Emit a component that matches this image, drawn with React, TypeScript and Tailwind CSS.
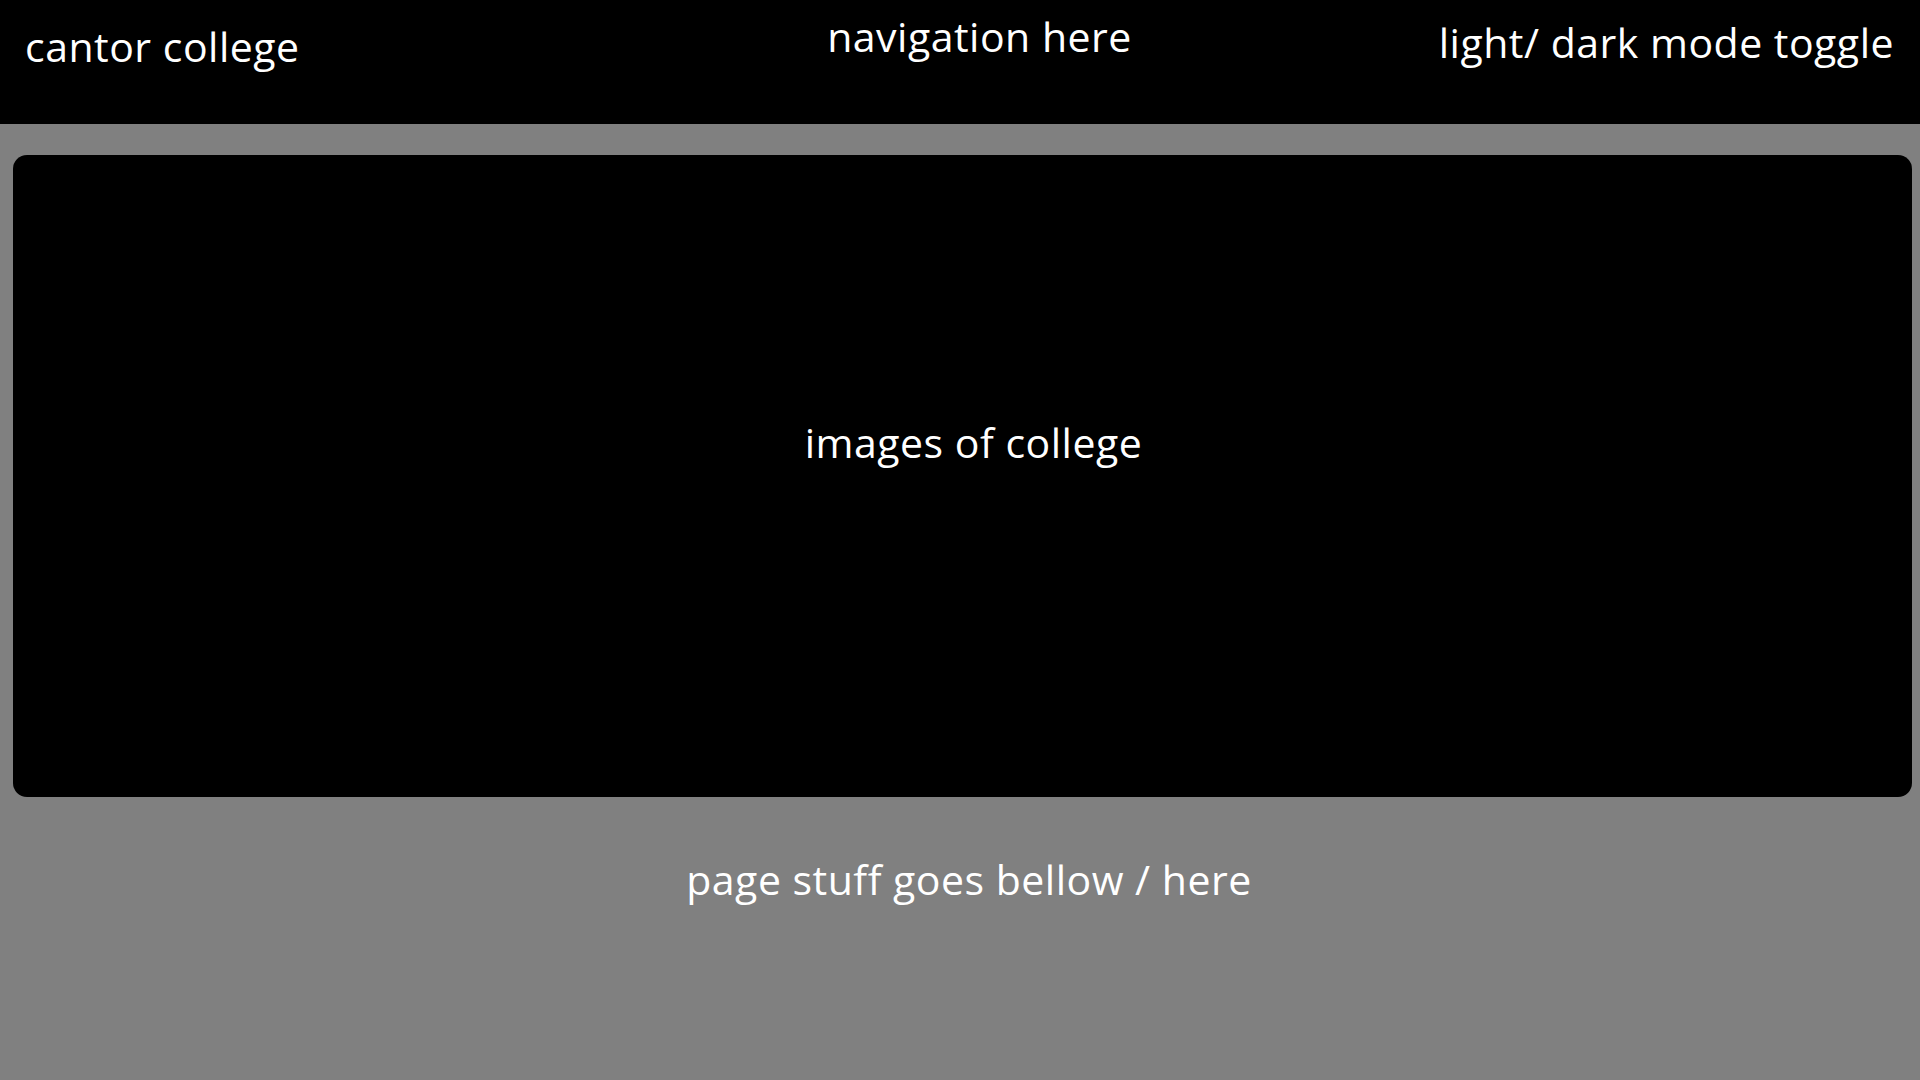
export default function App() {
  return (
    <div
      className="min-h-screen bg-[#808080] text-white"
      style={{ fontFamily: '"Open Sans", "Noto Sans", sans-serif' }}
    >
      <header className="flex h-[124px] items-start bg-black text-[41px] leading-[48px] tracking-[0.5px]">
        <div className="flex-1 pl-[25px] pt-[22px]">cantor college</div>
        <nav className="pl-[40px] pt-[12px]">navigation here</nav>
        <div className="flex-1 pr-[26px] pt-[18px] text-right">light/ dark mode toggle</div>
      </header>
      <main className="pt-[31px]">
        <section className="ml-[13px] mr-[8px] flex h-[642px] items-center justify-center rounded-[14px] bg-black pb-[68px]">
          <h1 className="pl-[22px] text-[41px] leading-[48px] tracking-[0.5px]">images of college</h1>
        </section>
        <p className="pt-[58px] pl-[18px] text-center text-[41px] leading-[48px] tracking-[0.5px]">
          page stuff goes bellow / here
        </p>
      </main>
    </div>
  );
}
